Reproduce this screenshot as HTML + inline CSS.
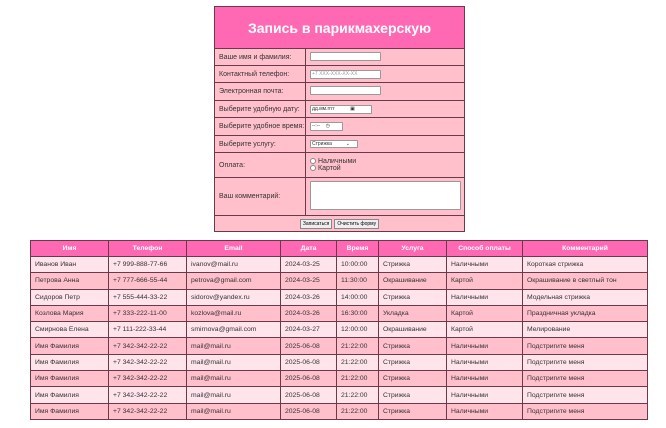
<!DOCTYPE html>
<html><head><meta charset="utf-8"><style>
body{margin:0;width:666px;height:428px;background:#fff;font-family:"Liberation Sans",Arial,sans-serif;position:relative;overflow:hidden}
table{border-collapse:collapse;position:absolute;table-layout:fixed}
#f{left:214px;top:6px;width:251px;background:#ffc0cb;font-size:7px;color:#333}
#f td{border:1px solid #6b3a4a;padding:0 4px;white-space:nowrap}
#f .h{background:#ff69b4;color:#fff;font-weight:bold;font-size:14px;text-align:center;height:41px;padding:0}
.in{display:inline-block;width:68px;height:7px;background:#fff;border:1px solid #999;border-radius:1px;font-size:5px;color:#999;line-height:7px;padding-left:1px}
.r{display:inline-block;width:4px;height:4px;border:1px solid #888;border-radius:50%;background:#fff;margin-right:2px;vertical-align:middle}
.b{display:inline-block;border:1px solid #888;background:#eee;font-size:5px;padding:1px 2px;color:#000}
#d{left:30px;top:240px;width:618px;font-size:6.8px;color:#333}
#d th{background:#ff69b4;color:#fff;height:15px;border:1px solid #6b3a4a;font-weight:bold;padding:0}
#d td{border:1px solid #6b3a4a;height:15.3px;padding:0 4px;white-space:nowrap;overflow:hidden}
#d tr:nth-child(even) td{background:#ffe4ec}
#d tr:nth-child(odd) td{background:#ffc0cb}
</style></head><body>
<table id="f">
<colgroup><col style="width:91px"><col></colgroup>
<tr><td colspan="2" class="h">Запись в парикмахерскую</td></tr>
<tr style="height:17px"><td>Ваше имя и фамилия:</td><td><span class="in"></span></td></tr>
<tr style="height:17px"><td>Контактный телефон:</td><td><span class="in">+7 XXX-XXX-XX-XX</span></td></tr>
<tr style="height:18px"><td>Электронная почта:</td><td><span class="in"></span></td></tr>
<tr style="height:17px"><td>Выберите удобную дату:</td><td><span class="in" style="width:59px;color:#333">дд.мм.гггг &nbsp;&nbsp;&nbsp;&nbsp;&nbsp;&nbsp;&nbsp;&nbsp;&nbsp;&nbsp;▣</span></td></tr>
<tr style="height:18px"><td>Выберите удобное время:</td><td><span class="in" style="width:30px;color:#333">--:-- &nbsp;&nbsp;&nbsp;◷</span></td></tr>
<tr style="height:17px"><td>Выберите услугу:</td><td><span class="in" style="width:45px;color:#333;height:6px">Стрижка &nbsp;&nbsp;&nbsp;&nbsp;&nbsp;&nbsp;&nbsp;&nbsp;&nbsp;⌄</span></td></tr>
<tr style="height:25px"><td>Оплата:</td><td><span class="r"></span>Наличными<br><span class="r"></span>Картой</td></tr>
<tr style="height:38px"><td>Ваш комментарий:</td><td><span class="in" style="width:148px;height:27px"></span></td></tr>
<tr style="height:16px"><td colspan="2" style="text-align:center"><span class="b">Записаться</span> <span class="b">Очистить форму</span></td></tr>
</table>
<table id="d">
<colgroup><col style="width:78px"><col style="width:78px"><col style="width:94px"><col style="width:56px"><col style="width:42px"><col style="width:68px"><col style="width:76px"><col></colgroup>
<tr><th>Имя</th><th>Телефон</th><th>Email</th><th>Дата</th><th>Время</th><th>Услуга</th><th>Способ оплаты</th><th>Комментарий</th></tr>
<tr><td>Иванов Иван</td><td>+7 999-888-77-66</td><td>ivanov@mail.ru</td><td>2024-03-25</td><td>10:00:00</td><td>Стрижка</td><td>Наличными</td><td>Короткая стрижка</td></tr>
<tr><td>Петрова Анна</td><td>+7 777-666-55-44</td><td>petrova@gmail.com</td><td>2024-03-25</td><td>11:30:00</td><td>Окрашивание</td><td>Картой</td><td>Окрашивание в светлый тон</td></tr>
<tr><td>Сидоров Петр</td><td>+7 555-444-33-22</td><td>sidorov@yandex.ru</td><td>2024-03-26</td><td>14:00:00</td><td>Стрижка</td><td>Наличными</td><td>Модельная стрижка</td></tr>
<tr><td>Козлова Мария</td><td>+7 333-222-11-00</td><td>kozlova@mail.ru</td><td>2024-03-26</td><td>16:30:00</td><td>Укладка</td><td>Картой</td><td>Праздничная укладка</td></tr>
<tr><td>Смирнова Елена</td><td>+7 111-222-33-44</td><td>smirnova@gmail.com</td><td>2024-03-27</td><td>12:00:00</td><td>Окрашивание</td><td>Картой</td><td>Мелирование</td></tr>
<tr><td>Имя Фамилия</td><td>+7 342-342-22-22</td><td>mail@mail.ru</td><td>2025-06-08</td><td>21:22:00</td><td>Стрижка</td><td>Наличными</td><td>Подстригите меня</td></tr>
<tr><td>Имя Фамилия</td><td>+7 342-342-22-22</td><td>mail@mail.ru</td><td>2025-06-08</td><td>21:22:00</td><td>Стрижка</td><td>Наличными</td><td>Подстригите меня</td></tr>
<tr><td>Имя Фамилия</td><td>+7 342-342-22-22</td><td>mail@mail.ru</td><td>2025-06-08</td><td>21:22:00</td><td>Стрижка</td><td>Наличными</td><td>Подстригите меня</td></tr>
<tr><td>Имя Фамилия</td><td>+7 342-342-22-22</td><td>mail@mail.ru</td><td>2025-06-08</td><td>21:22:00</td><td>Стрижка</td><td>Наличными</td><td>Подстригите меня</td></tr>
<tr><td>Имя Фамилия</td><td>+7 342-342-22-22</td><td>mail@mail.ru</td><td>2025-06-08</td><td>21:22:00</td><td>Стрижка</td><td>Наличными</td><td>Подстригите меня</td></tr>
</table>
</body></html>
